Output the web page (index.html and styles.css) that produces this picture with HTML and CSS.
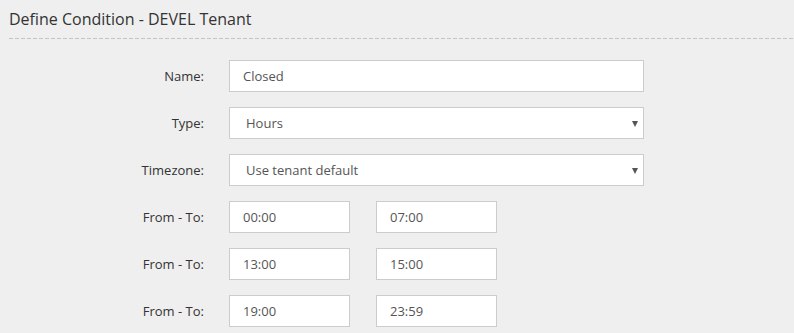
FILE: index.html
```html
<!DOCTYPE html>
<html lang="en">
<head>
    <meta charset="UTF-8">
    <title>Define Condition</title>
    <link rel="stylesheet" href="styles.css">
</head>
<body>
    <div class="page">
        <h2 class="page-title">Define Condition - DEVEL Tenant</h2>

        <form class="condition-form">
            <div class="form-row">
                <label for="name">Name:</label>
                <input type="text" id="name" class="field" value="Closed">
            </div>
            <div class="form-row">
                <label for="type">Type:</label>
                <div class="select-wrap">
                    <select id="type" class="field">
                        <option>Hours</option>
                    </select>
                </div>
            </div>
            <div class="form-row">
                <label for="tz">Timezone:</label>
                <div class="select-wrap">
                    <select id="tz" class="field">
                        <option>Use tenant default</option>
                    </select>
                </div>
            </div>
            <div class="form-row">
                <label>From - To:</label>
                <div class="range">
                    <input type="text" class="field short" value="00:00">
                    <input type="text" class="field short" value="07:00">
                </div>
            </div>
            <div class="form-row">
                <label>From - To:</label>
                <div class="range">
                    <input type="text" class="field short" value="13:00">
                    <input type="text" class="field short" value="15:00">
                </div>
            </div>
            <div class="form-row">
                <label>From - To:</label>
                <div class="range">
                    <input type="text" class="field short" value="19:00">
                    <input type="text" class="field short" value="23:59">
                </div>
            </div>
        </form>
    </div>
</body>
</html>
```

FILE: styles.css
```css
body {
    margin: 0;
    background-color: #efefef;
    font-family: "Open Sans", Arial, sans-serif;
    color: #333;
}
.page {
    padding: 8px 0 0 9px;
}
.page-title {
    margin: 0;
    font-size: 16px;
    font-weight: normal;
    line-height: 22px;
    color: #333;
    height: 22px;
    padding-bottom: 9px;
    background-image: repeating-linear-gradient(to right, #c4c4c4 0, #c4c4c4 4px, transparent 4px, transparent 6px);
    background-size: 100% 1px;
    background-repeat: no-repeat;
    background-position: left bottom;
}
.condition-form {
    padding-top: 21px;
}
.form-row {
    display: flex;
    align-items: center;
    height: 32px;
    margin-bottom: 15px;
}
.form-row label {
    width: 195px;
    text-align: right;
    font-size: 13px;
    color: #333;
    margin-right: 25px;
}
.field {
    box-sizing: border-box;
    height: 32px;
    border: 1px solid #cccccc;
    background-color: #fff;
    font-family: "Open Sans", Arial, sans-serif;
    font-size: 13px;
    color: #555;
    padding: 0 13px;
    outline: none;
    margin: 0;
}
input.field {
    width: 415px;
}
.select-wrap {
    position: relative;
    width: 415px;
    height: 32px;
}
.select-wrap select {
    width: 100%;
    appearance: none;
    -webkit-appearance: none;
    border-radius: 0;
    padding-left: 16px;
}
.select-wrap::after {
    content: "";
    position: absolute;
    right: 6px;
    top: 14px;
    border-left: 3px solid transparent;
    border-right: 3px solid transparent;
    border-top: 6px solid #555;
}
.range {
    display: flex;
    gap: 26px;
}
input.field.short {
    width: 121px;
}
```
